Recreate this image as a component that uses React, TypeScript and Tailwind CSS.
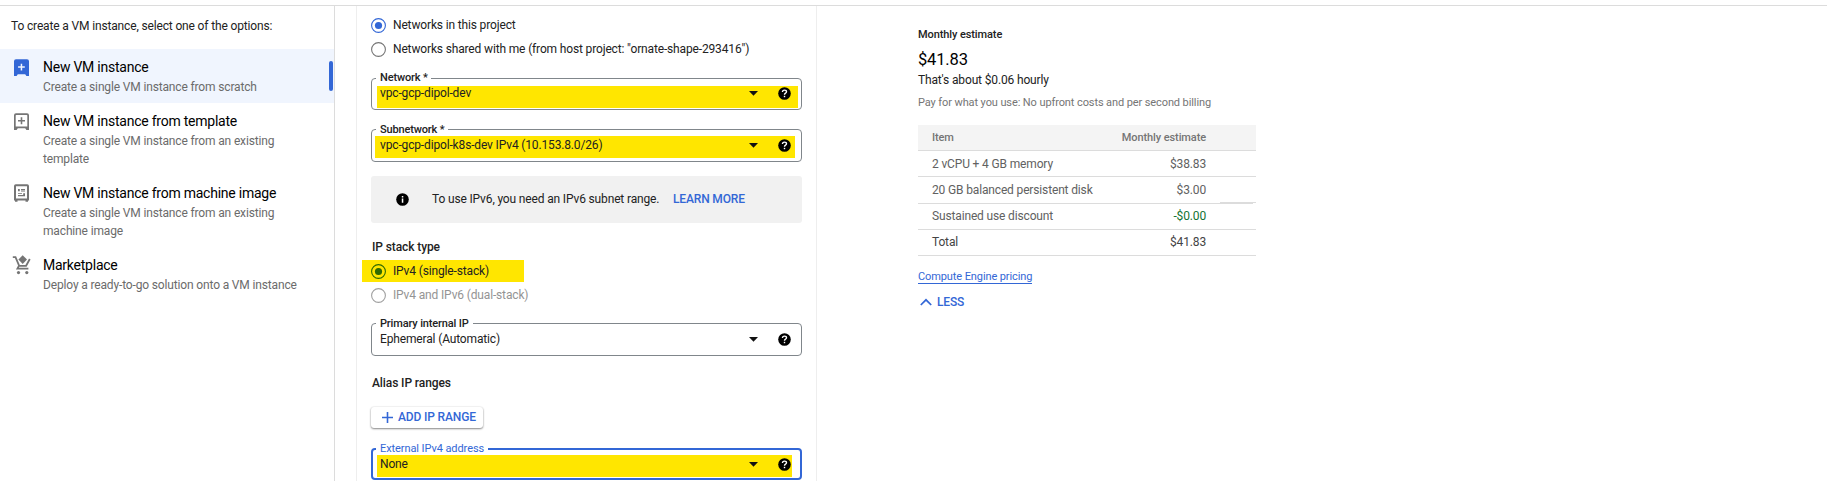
import type { ReactNode } from 'react';

function VmFilledIcon() {
  return (
    <svg width="15" height="18" viewBox="0 0 15 18" className="ml-[14px] mt-[10px] shrink-0">
      <path fillRule="evenodd" fill="#3367d6" d="M2 0.300h11q2 0 2 2v14.700h-2.600l-1.200-1.700H3.800L2.600 17H0V2.300q0-2 2-2zM6.700 4.700v2.600H4.100v1.500h2.600v2.600h1.500V8.800h2.600V7.300H8.200V4.700z" />
    </svg>
  );
}

function VmOutlineIcon() {
  return (
    <svg width="15" height="18" viewBox="0 0 15 18" className="ml-[14px] mt-[10px] shrink-0">
      <path fillRule="evenodd" fill="#757575" d="M2 0.300h11q2 0 2 2v14.700h-2.600l-1.200-1.700H3.800L2.600 17H0V2.300q0-2 2-2zM2.300 1.900q-.6 0-.6.600v11h11.600v-11q0-.6-.6-.6z" />
      <path fill="#757575" d="M6.700 4.300h1.600v2.700H11v1.600H8.300v2.700H6.700V8.600H4V7h2.700z" />
    </svg>
  );
}

function MachineImageIcon() {
  return (
    <svg width="15" height="19" viewBox="0 0 15 19" className="ml-[14px] mt-[9px] shrink-0">
      <path fillRule="evenodd" fill="#757575" d="M1.800 0.300h11.400q1.800 0 1.800 1.800v14.400h-1v1.300h-2.500v-1.300h-8v1.300H1v-1.300H0V2.100Q0 .3 1.800.300zM2 2.200v12.300h11V2.200z" />
      <path fill="#757575" d="M4 5h1.800v2.200H4zM7 5h4v.9H7zM7 6.500h4v.9H7zM4 9.200h4v.9H4zM4 11h7v1.200H4zM9.200 9.200H11v1.800H9.200z" />
    </svg>
  );
}

function MarketplaceIcon() {
  return (
    <svg width="19" height="20" viewBox="0 0 19 20" className="ml-[12px] mt-[8px] shrink-0">
      <path fill="#757575" d="M10.700.2 15 4.500l-4.300 4.400-4.300-4.400z" />
      <path fill="none" stroke="#757575" strokeWidth="1.800" d="M.8 2.200h2.700l3.700 8.600h6.900l3.700-6.800M6.900 10.800l-1.500 2.900h11" />
      <circle cx="6.500" cy="17.600" r="1.600" fill="#757575" />
      <circle cx="14.800" cy="17.600" r="1.600" fill="#757575" />
    </svg>
  );
}

function HelpIcon() {
  return (
    <svg width="13" height="13" viewBox="0 0 13 13" className="mt-px mr-[10px]">
      <circle cx="6.500" cy="6.500" r="6.300" fill="#000" />
      <path d="M4.500 5.100q0-2 2-2t2 1.700q0 .8-1 1.400-1 .6-1 1.500" fill="none" stroke="#fff" strokeWidth="1.400" />
      <rect x="5.800" y="8.800" width="1.400" height="1.400" fill="#fff" />
    </svg>
  );
}

function InfoIcon() {
  return (
    <svg width="13" height="13" viewBox="0 0 13 13" className="ml-[25px] shrink-0">
      <circle cx="6.500" cy="6.500" r="6.300" fill="#000" />
      <path d="M5.800 5.600h1.500v4.200H5.800zM5.800 3.100h1.500v1.500H5.800z" fill="#fff" />
    </svg>
  );
}

function Radio({ ring, dot }: { ring: string; dot?: string }) {
  return (
    <svg width="15" height="15" viewBox="0 0 15 15" className="shrink-0">
      <circle cx="7.500" cy="7.500" r="6.900" fill="none" stroke={ring} strokeWidth="1.100" />
      {dot && <circle cx="7.500" cy="7.500" r="3.600" fill={dot} />}
    </svg>
  );
}

type OptionProps = {
  icon: ReactNode;
  title: ReactNode;
  children: ReactNode;
  selected?: boolean;
};

function Option({ icon, title, children, selected }: OptionProps) {
  return (
    <div className={selected ? 'flex bg-[#f0f5fe]' : 'flex'}>
      <div className="w-[43px] shrink-0">{icon}</div>
      <div className="grow pt-[8px] pb-[7px] whitespace-nowrap">
        <div className="text-[14px] leading-[21px] tracking-[-0.24px] text-black">{title}</div>
        <div className="leading-[18px] text-[#6b6b6b]">{children}</div>
      </div>
      {selected && <div className="mt-[12px] mr-px h-[30px] w-[4px] rounded-[2px] bg-[#3367d6]" />}
    </div>
  );
}

type FieldProps = {
  label: ReactNode;
  value: ReactNode;
  box: string;
  labelClass: string;
  fill: string;
  row: string;
};

function Field({ label, value, box, labelClass, fill, row }: FieldProps) {
  return (
    <div className={`relative w-[431px] rounded-[4px] ${box}`}>
      <div className={`absolute ${fill}`} />
      <div className={`absolute pl-[4px] text-[11px] leading-[14px] whitespace-nowrap ${labelClass}`}>
        <div className="absolute top-[4px] left-0 h-[6px] w-full bg-white" />
        <span className="relative">{label}</span>
      </div>
      <div className={`relative flex h-[28px] items-center text-[#222] ${row}`}>
        <span className="grow whitespace-nowrap">{value}</span>
        <svg width="9" height="5" viewBox="0 0 9 5" className="mr-[20px]">
          <path d="M0 0h9L4.500 4.700z" fill="#111" />
        </svg>
        <HelpIcon />
      </div>
    </div>
  );
}

const rows = [
  { item: '2 vCPU + 4 GB memory', price: '$38.83', row: 'h-[26px] text-[#616161]', amount: '', raised: false },
  { item: '20 GB balanced persistent disk', price: '$3.00', row: 'h-[27px] pb-px text-[#616161]', amount: '', raised: true },
  { item: 'Sustained use discount', price: '-$0.00', row: 'h-[26px] pb-[2px] text-[#616161]', amount: 'text-[#137333]', raised: false },
  { item: 'Total', price: '$41.83', row: 'h-[26px] pb-[2px] text-[#444]', amount: '', raised: false },
];

export default function App() {
  return (
    <div className="flex h-[481px] w-[1827px] flex-col overflow-hidden bg-white pt-[5px] font-['Roboto',sans-serif] text-[12px] tracking-[-0.15px] text-[#222]">
      <div className="flex grow border-t border-[#dcdcdc]">
        <aside className="w-[335px] shrink-0 border-r border-[#dcdcdc]">
          <div className="h-[43px] pt-[11px] pl-[11px] leading-[18px] whitespace-nowrap">
            To create a VM instance, select one of the options:
          </div>
          <Option icon={<VmFilledIcon />} title="New VM instance" selected>
            Create a single VM instance from scratch
          </Option>
          <Option icon={<VmOutlineIcon />} title="New VM instance from template">
            Create a single VM instance from an existing
            <br />
            template
          </Option>
          <Option icon={<MachineImageIcon />} title="New VM instance from machine image">
            Create a single VM instance from an existing
            <br />
            machine image
          </Option>
          <Option icon={<MarketplaceIcon />} title="Marketplace">
            Deploy a ready-to-go solution onto a VM instance
          </Option>
        </aside>

        <main className="ml-[21px] h-[475px] w-[461px] shrink-0 border-x border-[#eee] pl-[14px]">
          <div className="flex h-[24px] items-center gap-[7px] pt-[15px]">
            <Radio ring="#3367d6" dot="#3367d6" />
            <span className="pb-[2px]">Networks in this project</span>
          </div>
          <div className="mt-[7px] flex h-[24px] items-center gap-[7px]">
            <Radio ring="#757575" />
            <span>Networks shared with me (from host project: "ornate-shape-293416")</span>
          </div>

          <Field
            label="Network *"
            value="vpc-gcp-dipol-dev"
            box="mt-[17px] h-[32px] border border-[#80868b]"
            labelClass="left-[4px] -top-[8px] w-[55px] font-medium"
            fill="left-[5px] top-[7px] h-[22px] w-[421px] bg-[#ffe600]"
            row="pl-[8px]"
          />
          <Field
            label="Subnetwork *"
            value="vpc-gcp-dipol-k8s-dev IPv4 (10.153.8.0/26)"
            box="mt-[19px] h-[33px] border border-[#80868b]"
            labelClass="left-[4px] -top-[7px] w-[72px] font-medium"
            fill="left-[3px] top-[6px] h-[22px] w-[420px] bg-[#ffe600]"
            row="mt-px pl-[8px]"
          />

          <div className="mt-[14px] flex h-[47px] w-[431px] items-center rounded-[3px] bg-[#f1f1f1] whitespace-nowrap">
            <InfoIcon />
            <span className="ml-[23px] w-[241px] pb-[2px]">To use IPv6, you need an IPv6 subnet range.</span>
            <span className="pb-[2px] font-medium text-[#3367d6]">LEARN MORE</span>
          </div>

          <div className="mt-[15px] h-[22px] pl-px leading-[18px] font-medium tracking-[-0.1px]">IP stack type</div>
          <div className="-ml-[9px] flex h-[22px] w-[162px] items-center gap-[7px] bg-[#ffe600] pl-[9px]">
            <Radio ring="#2f6a00" dot="#2f6a00" />
            <span>IPv4 (single-stack)</span>
          </div>
          <div className="mt-[2px] flex h-[22px] items-center gap-[7px] text-[#949494]">
            <Radio ring="#a0a0a0" />
            <span>IPv4 and IPv6 (dual-stack)</span>
          </div>

          <Field
            label="Primary internal IP"
            value="Ephemeral (Automatic)"
            box="mt-[17px] h-[33px] border border-[#80868b]"
            labelClass="left-[4px] -top-[7px] w-[97px] font-medium"
            fill="hidden"
            row="mt-px pl-[8px]"
          />

          <div className="mt-[18px] h-[33px] pl-px leading-[18px] font-medium tracking-[-0.1px]">Alias IP ranges</div>
          <button className="flex h-[21px] w-[112px] items-center rounded-[3px] pb-px pl-[11px] font-medium whitespace-nowrap text-[#3367d6] shadow-[0_1px_2px_rgba(0,0,0,0.45),0_0_2px_rgba(0,0,0,0.12)]">
            <svg width="11" height="11" viewBox="0 0 11 11" className="mt-px mr-[5px] shrink-0">
              <path d="M4.700 0h1.600v4.700H11v1.600H6.300V11H4.700V6.300H0V4.700h4.700z" fill="#3367d6" />
            </svg>
            ADD IP RANGE
          </button>

          <Field
            label="External IPv4 address"
            value="None"
            box="mt-[20px] h-[32px] border-2 border-[#3367d6]"
            labelClass="left-[3px] -top-[8px] w-[112px] tracking-[-0.08px] text-[#3367d6]"
            fill="left-[4px] top-[5px] h-[22px] w-[415px] bg-[#ffe600]"
            row="-mr-px pl-[7px]"
          />
        </main>

        <section className="ml-[101px] w-[338px] whitespace-nowrap">
          <div className="mt-[21px] text-[11px] leading-[16px] font-medium tracking-[-0.1px]">Monthly estimate</div>
          <div className="mt-[7px] text-[16.500px] leading-[20px] text-black">$41.83</div>
          <div className="mt-[2px] leading-[16px]">That's about $0.06 hourly</div>
          <div className="mt-[7px] text-[11px] leading-[16px] tracking-[-0.1px] text-[#757575]">
            Pay for what you use: No upfront costs and per second billing
          </div>
          <div className="mt-[14px] flex h-[26px] items-center justify-between border-b border-[#dcdcdc] bg-[#f4f4f4] pt-px pr-[50px] pl-[14px] text-[11px] font-medium tracking-[-0.1px] text-[#757575]">
            <span>Item</span>
            <span>Monthly estimate</span>
          </div>
          {rows.map((r) => (
            <div key={r.item} className={`relative flex items-center justify-between border-b border-[#dcdcdc] pr-[50px] pl-[14px] ${r.row}`}>
              <span>{r.item}</span>
              <span className={r.amount}>{r.price}</span>
              {r.raised && <div className="absolute right-0 bottom-0 h-px w-[36px] bg-[#dcdcdc]" />}
              {r.raised && <div className="absolute right-0 -bottom-px h-px w-[3px] bg-white" />}
            </div>
          ))}
          <div className="mt-[14px] w-[114px] border-b border-[#3367d6] text-[11px] leading-[13px] tracking-[-0.1px] text-[#3367d6]">
            Compute Engine pricing
          </div>
          <div className="mt-[9px] flex items-center leading-[18px] font-medium text-[#3367d6]">
            <svg width="12" height="8" viewBox="0 0 12 8" className="mr-[5px] ml-[2px]">
              <path d="M.8 7 6 1.800 11.200 7" fill="none" stroke="#3367d6" strokeWidth="1.700" />
            </svg>
            LESS
          </div>
        </section>
      </div>
    </div>
  );
}
